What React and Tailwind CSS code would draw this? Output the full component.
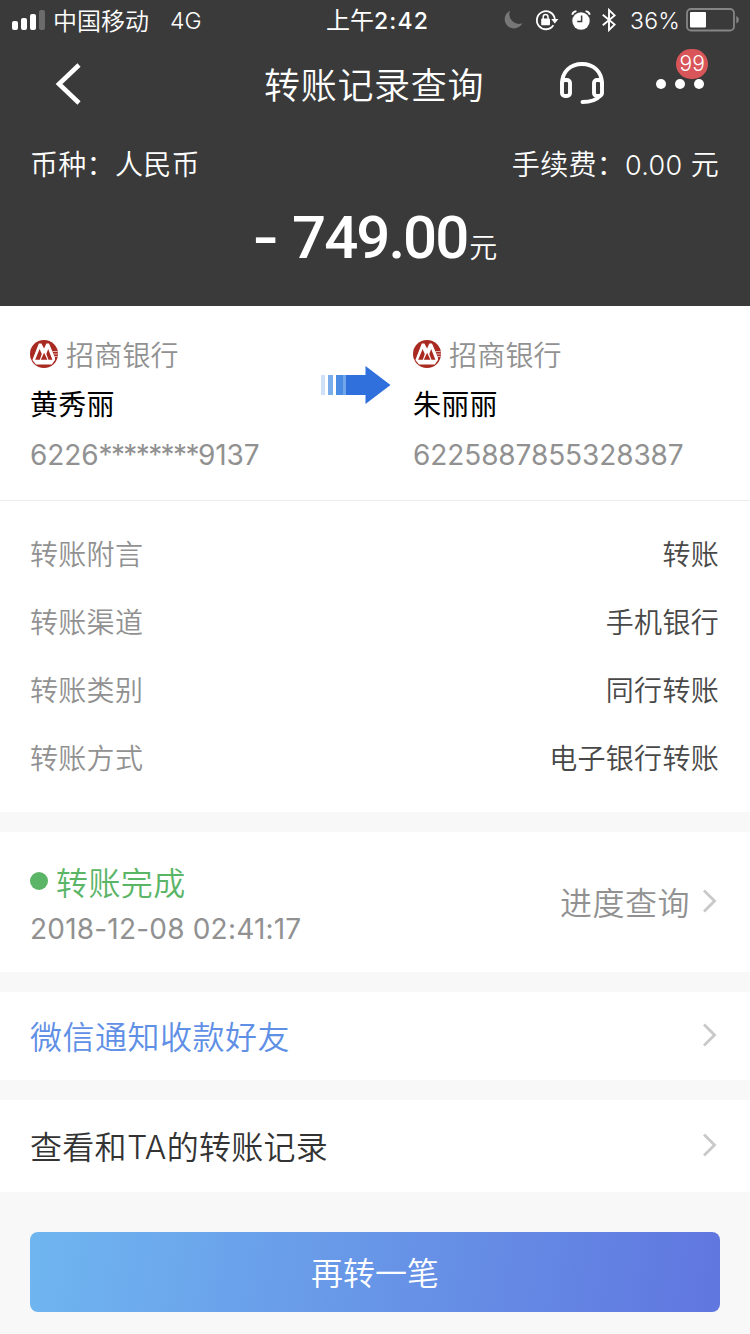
const details = [
  { label: "转账附言", value: "转账" },
  { label: "转账渠道", value: "手机银行" },
  { label: "转账类别", value: "同行转账" },
  { label: "转账方式", value: "电子银行转账" },
];

const Chevron = () => (
  <svg
    className="mb-[3px]"
    width="16"
    height="26"
    viewBox="0 0 16 26"
    fill="none"
  >
    <path d="M2 2.5 12.5 13 2 23.5" stroke="#c9c9c9" strokeWidth="2.8" />
  </svg>
);

const BankLogo = () => (
  <svg width="28" height="28" viewBox="0 0 28 28">
    <circle cx="14" cy="14" r="14" fill="#a82a20" />
    <path
      d="M2.4 20 8.8 3.4h2.6L14.1 8.6l2.2-5.200H19L25 17.500V20l-3.200 4.600H6Z"
      fill="#fff"
    />
    <path
      d="M5.200 19.800 9.600 9 11.800 14 9.800 19.800ZM10.800 19.800 14.100 12.800 17.400 19.800ZM16.300 14 18.200 9 22.400 19.800H18.500Z"
      fill="#a82a20"
    />
    <path
      d="M22.200 11.500H27.800M23.200 14H28M24.200 16.500H27.800"
      stroke="#e3b5b1"
      strokeWidth="1.1"
    />
  </svg>
);

const StatusBar = () => (
  <div className="flex h-10 items-center pl-3 text-[24px] leading-10">
    <div className="flex w-[314px] items-center">
      <svg width="34" height="20" viewBox="0 0 34 20" fill="#fff">
        <rect x="0" y="11" width="6" height="9" rx="2" />
        <rect x="9" y="8" width="6" height="12" rx="2" />
        <rect x="18" y="4" width="6" height="16" rx="2" />
        <rect x="27" y="0" width="6" height="20" rx="2" opacity=".25" />
      </svg>
      <span className="ml-[7px] pt-[3px]">中国移动</span>
      <span className="ml-[21px] pt-[2px] text-[23px]">4G</span>
    </div>
    <div className="pt-[2px] font-normal whitespace-nowrap">
      上午
      <span className="text-[23px] font-medium tracking-[1.2px]">2:42</span>
    </div>
    <div className="mr-[10px] ml-auto flex items-center">
      {/* Do not disturb */}
      <svg width="20" height="20" viewBox="0 0 20 20" fill="#777">
        <path d="M6 .8A9.3 9.3 0 1 0 18.4 13.2 9.6 9.6 0 0 1 6 .8Z" />
      </svg>
      {/* Rotation lock */}
      <svg className="ml-[11px]" width="24" height="22" viewBox="0 0 24 22">
        <path
          d="M18.4 16.2A9 9 0 1 1 19.8 10"
          fill="none"
          stroke="#fff"
          strokeWidth="1.8"
        />
        <path d="M16.2 10h7.2l-3.6 4.4Z" fill="#fff" />
        <rect x="6.2" y="9.6" width="8.8" height="6.6" rx="1" fill="#fff" />
        <path
          d="M8.2 10V8a2.4 2.4 0 0 1 4.8 0v2"
          fill="none"
          stroke="#fff"
          strokeWidth="1.5"
        />
      </svg>
      {/* Alarm */}
      <svg className="ml-3" width="20" height="20" viewBox="0 0 20 20">
        <circle cx="10" cy="11" r="8.7" fill="#fff" />
        <path
          d="M1.200 4.800Q2 1.600 5.400 1.200M18.800 4.800Q18 1.600 14.600 1.200"
          fill="none"
          stroke="#fff"
          strokeWidth="1.8"
        />
        <path
          d="M10.6 5.5V11.500H6.200"
          fill="none"
          stroke="#3a3a3a"
          strokeWidth="1.5"
        />
      </svg>
      {/* Bluetooth */}
      <svg className="ml-[11px]" width="14" height="24" viewBox="0 0 14 24">
        <path
          d="M.8 6.8 12.6 16.6 7 22V2l5.600 5.400L.8 17.200"
          fill="none"
          stroke="#fff"
          strokeWidth="1.9"
        />
      </svg>
      <span className="ml-[14px] w-[56px] pt-[2px] text-[23px] tracking-[0.3px]">
        36%
      </span>
      <svg width="54" height="24" viewBox="0 0 54 24">
        <rect
          x="1"
          y="1"
          width="47"
          height="21.5"
          rx="4"
          fill="none"
          stroke="#858585"
          strokeWidth="1.8"
        />
        <rect x="4" y="4" width="16" height="15.5" rx="1" fill="#fff" />
        <path d="M50.3 8q2.6 1.200 2.600 3.800t-2.600 3.800Z" fill="#858585" />
      </svg>
    </div>
  </div>
);

const NavBar = () => (
  <div className="flex h-[88px] items-center">
    <svg className="ml-[55px]" width="28" height="42" viewBox="0 0 28 42">
      <path d="M24 2 4 21l20 19" fill="none" stroke="#fff" strokeWidth="4.6" />
    </svg>
    <h1 className="ml-[181px] pt-[3px] text-[36px] leading-[50px] tracking-[0.7px]">
      转账记录查询
    </h1>
    <svg
      className="mb-[2px] ml-[75px]"
      width="46"
      height="44"
      viewBox="0 0 46 44"
    >
      <g
        fill="none"
        stroke="#fff"
        strokeWidth="3.9"
        strokeLinecap="round"
        strokeLinejoin="round"
      >
        <path d="M3 23C3 10 12 3 23 3s20 7 20 20" />
        <rect x="3" y="19" width="8" height="16" rx="3" />
        <rect x="35" y="19" width="8" height="16" rx="3" />
        <path d="M41 35C37 39.500 31 41 23.500 41" />
      </g>
    </svg>
    <div className="relative ml-[51px] flex gap-[9px]">
      <i className="size-[10px] rounded-full bg-white" />
      <i className="size-[10px] rounded-full bg-white" />
      <i className="size-[10px] rounded-full bg-white" />
      <span className="absolute -top-[30px] left-5 flex h-[30px] w-8 items-center justify-center rounded-full bg-[#d8555a] text-[21px]">
        99
      </span>
    </div>
  </div>
);

const Account = ({ name, children }) => (
  <div>
    <div className="flex h-[48px] items-center gap-2 text-[28px] tracking-[0.2px] text-[#919191]">
      <BankLogo />
      <span className="pt-[3px]">招商银行</span>
    </div>
    <div className="mt-[2px] h-[50px] text-[28px] leading-[50px] font-normal tracking-[0.2px] text-black">
      {name}
    </div>
    <div className="h-[50px] text-[28px] leading-[50px] font-normal tracking-[-0.1px] text-[#919191]">
      {children}
    </div>
  </div>
);

const App = () => {
  return (
    <div className="h-[1334px] w-[750px] overflow-hidden bg-[#f8f8f8] font-['Inter','Noto_Sans_CJK_SC',sans-serif] font-[350]">
      <header className="h-[306px] bg-[#3a3a3a] text-white">
        <StatusBar />
        <NavBar />
        <div className="flex h-[72px] items-center justify-between pt-[2px] pr-[31px] pl-[30px] text-[28px] tracking-[0.3px]">
          <span>币种：人民币</span>
          <span>
            手续费：<span className="text-[27px]">0.00</span> 元
          </span>
        </div>
        <div className="flex items-baseline justify-center pt-px">
          <span className="mr-[19px] inline-block origin-left scale-x-125 font-['Roboto',sans-serif] text-[60px] leading-[74px] font-medium">
            -
          </span>
          <span className="font-['Roboto',sans-serif] text-[60px] leading-[74px] font-medium tracking-[-2px]">
            749.00
          </span>
          <span className="ml-[2px] text-[28px]">元</span>
        </div>
      </header>

      <section className="flex h-[195px] border-b border-[#ececec] bg-white pt-[24px] pl-[30px]">
        <div className="w-[290px]">
          <Account name="黄秀丽">
            6226<span className="tracking-[-1.6px]">********</span>9137
          </Account>
        </div>
        <svg
          className="mt-[35px] mr-[22px]"
          width="71"
          height="40"
          viewBox="0 0 71 40"
        >
          <rect x="1" y="10" width="4" height="20" fill="#cfe1f8" />
          <rect x="8" y="10" width="5" height="20" fill="#7aaeea" />
          <rect x="16" y="10" width="7" height="20" fill="#4a8be3" />
          <rect x="23" y="10" width="3" height="20" fill="#72a6ea" />
          <path d="M26 10H45.500V1L70.500 20 45.500 39V30H26Z" fill="#2f70dc" />
        </svg>
        <Account name="朱丽丽">6225887855328387</Account>
      </section>

      <section className="h-[311px] bg-white pt-5 pr-[31px] pl-[30px]">
        {details.map((item) => (
          <div
            key={item.label}
            className="flex h-[68px] items-center justify-between text-[28px] tracking-[0.3px]"
          >
            <span className="text-[#919191]">{item.label}</span>
            <span className="text-[#484848]">{item.value}</span>
          </div>
        ))}
      </section>

      <section className="mt-5 flex h-[140px] items-center justify-between bg-white pr-[32px] pl-[30px]">
        <div className="pt-[3px]">
          <div className="flex h-[46px] items-center gap-2 text-[32px] tracking-[0.4px] text-[#5bb567]">
            <i className="mb-[2px] size-[18px] rounded-full bg-[#5bb567]" />
            <span className="pt-[4px]">转账完成</span>
          </div>
          <div className="h-[44px] pt-[2px] text-[28px] leading-[44px] font-normal tracking-[0.2px] text-[#919191]">
            2018-12-08 02:41:17
          </div>
        </div>
        <div className="flex items-center gap-3 text-[32px] tracking-[0.5px] text-[#919191]">
          <span className="pt-[3px]">进度查询</span>
          <Chevron />
        </div>
      </section>

      <section className="mt-5 flex h-[88px] items-center justify-between bg-white pr-[32px] pl-[30px] text-[32px] tracking-[0.5px] text-[#608fe6]">
        <span className="pt-1">微信通知收款好友</span>
        <Chevron />
      </section>

      <section className="mt-5 flex h-[92px] items-center justify-between bg-white pr-[32px] pl-[30px] text-[32px] tracking-[0.3px] text-[#333]">
        <span className="pt-1">查看和TA的转账记录</span>
        <Chevron />
      </section>

      <button className="mt-10 ml-[30px] block h-20 w-[690px] rounded-lg bg-linear-[100deg,#6fb6f0,#6794e7_52%,#6076e0] pt-1 text-[32px] text-white">
        再转一笔
      </button>
    </div>
  );
};

export default App;
